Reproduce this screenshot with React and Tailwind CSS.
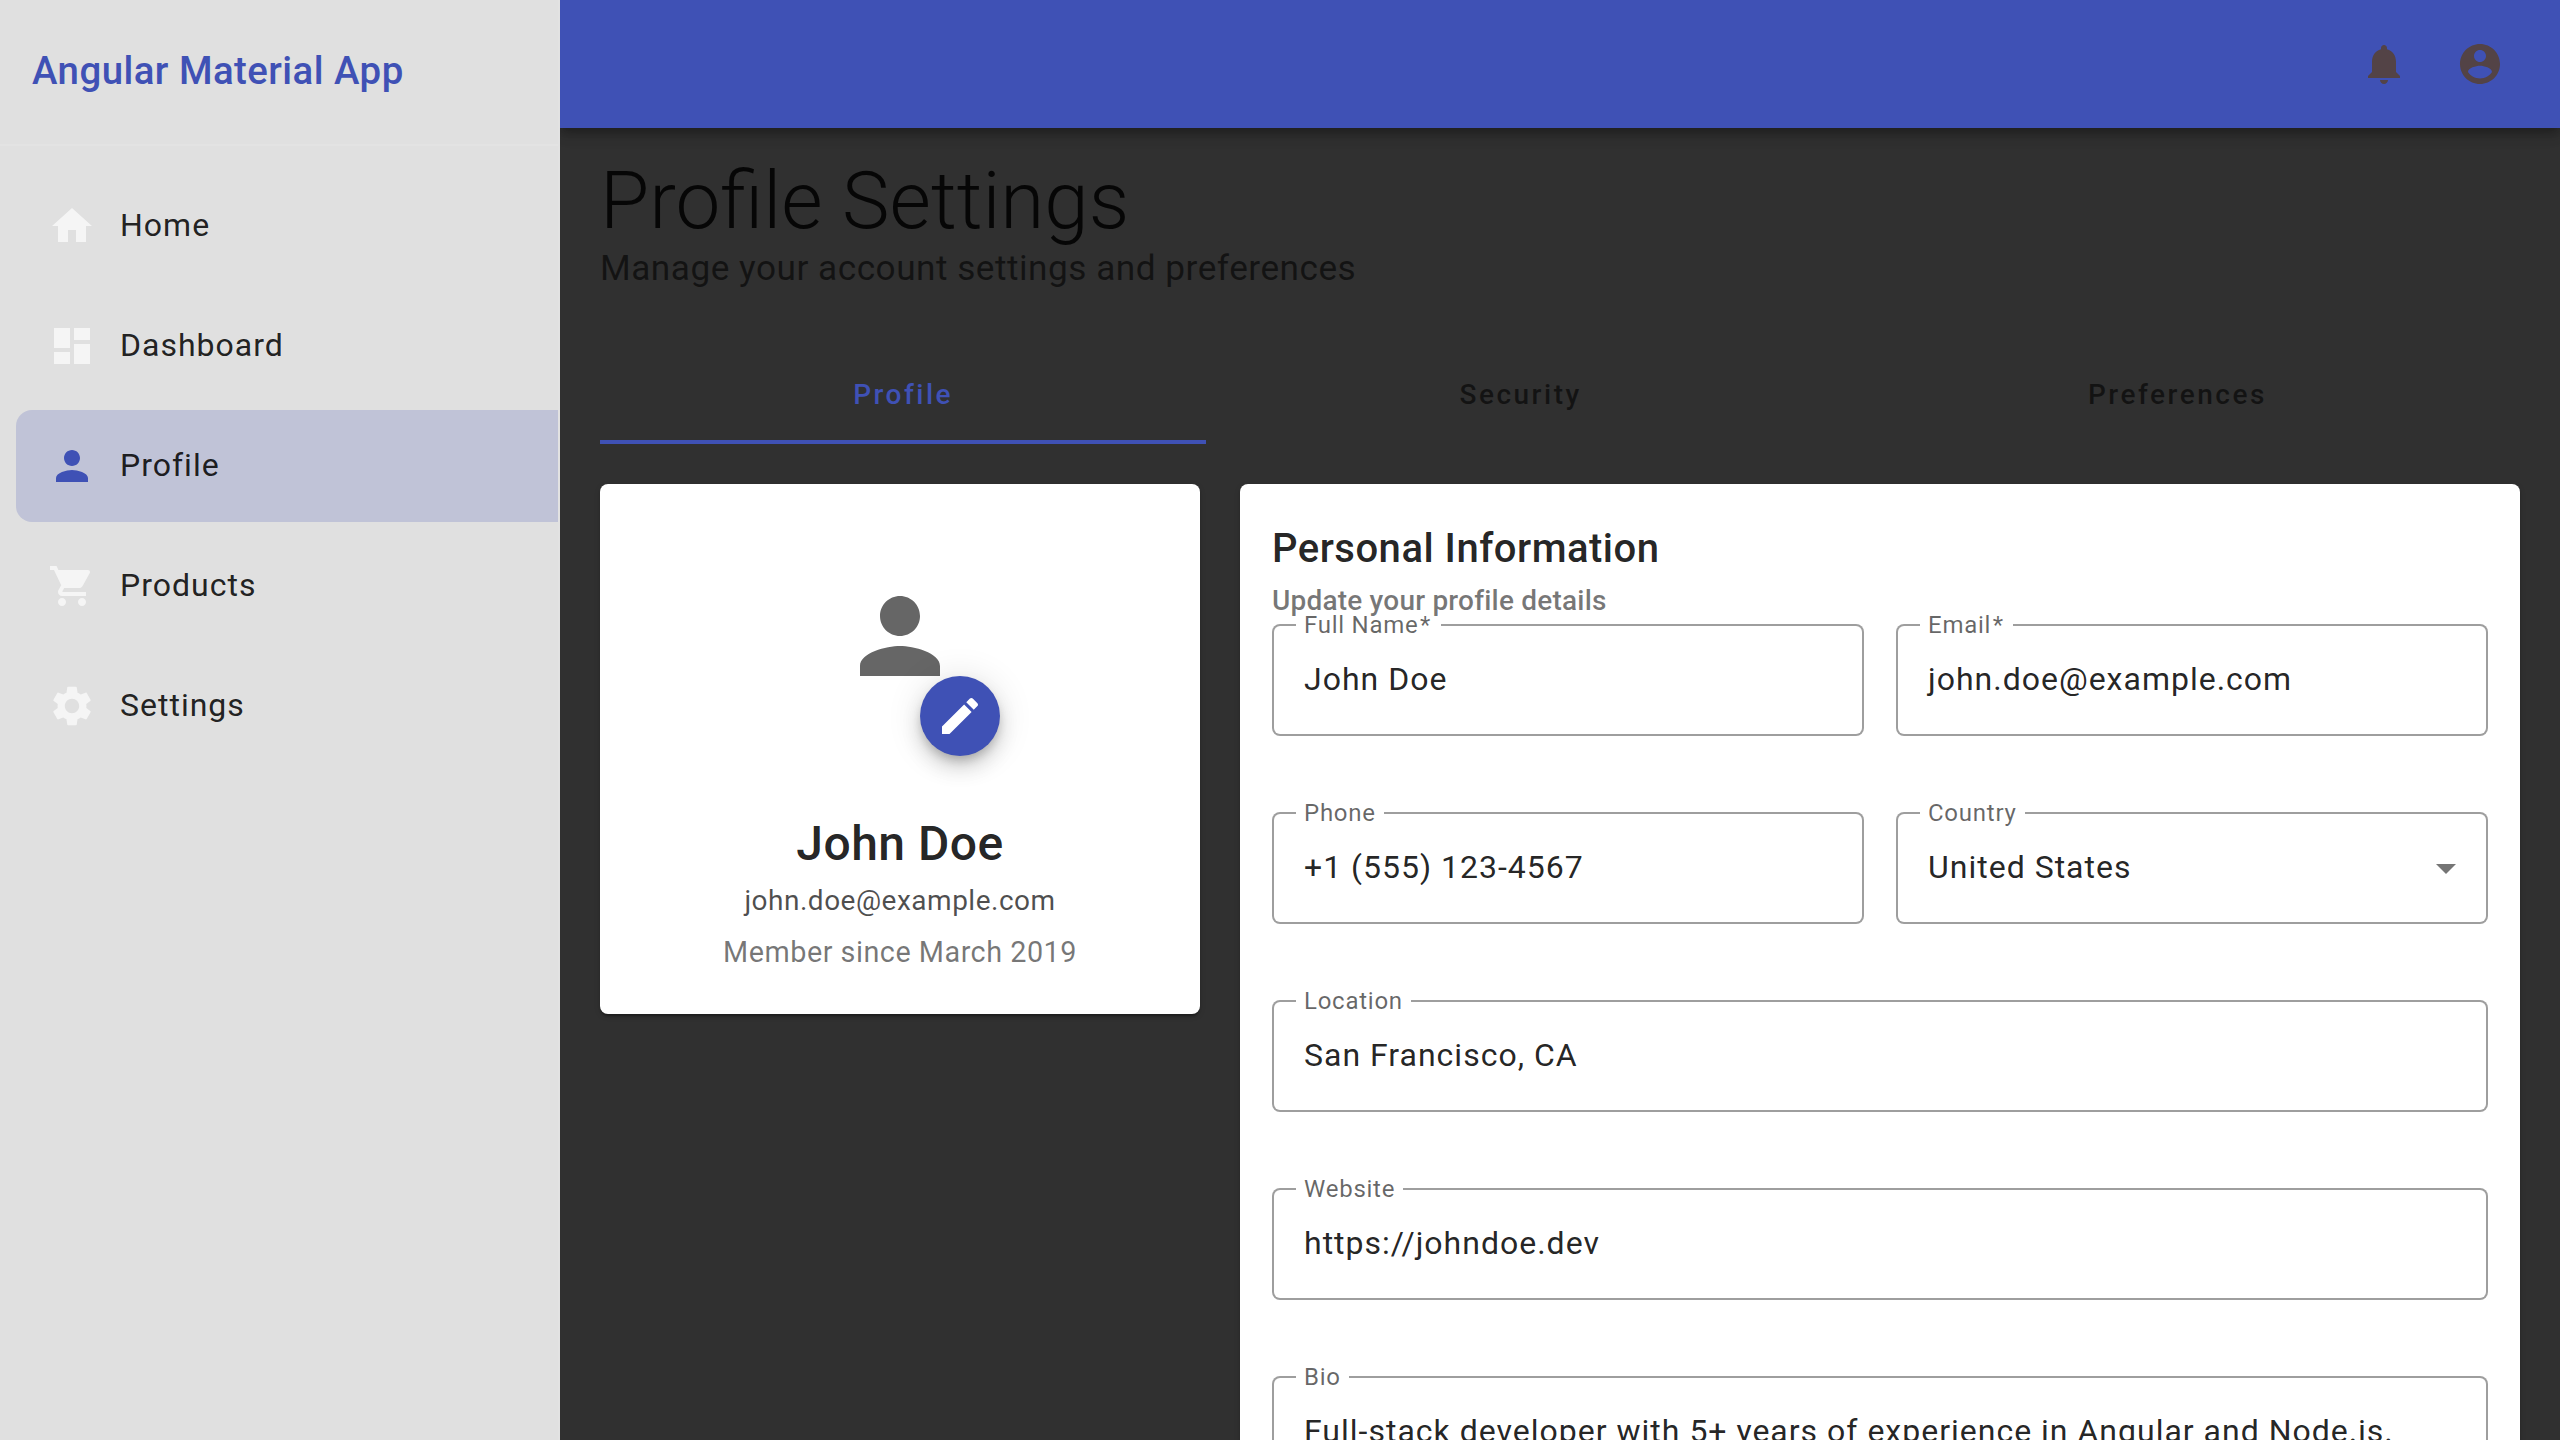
const ICONS = {
  home: 'M10 20v-6h4v6h5v-8h3L12 3 2 12h3v8z',
  dashboard: 'M3 13h8V3H3v10zm0 8h8v-6H3v6zm10 0h8V11h-8v10zm0-18v6h8V3h-8z',
  person:
    'M12 12c2.21 0 4-1.79 4-4s-1.79-4-4-4-4 1.79-4 4 1.79 4 4 4zm0 2c-2.67 0-8 1.34-8 4v2h16v-2c0-2.66-5.33-4-8-4z',
  cart:
    'M7 18c-1.1 0-1.99.9-1.99 2S5.9 22 7 22s2-.9 2-2-.9-2-2-2zM1 2v2h2l3.6 7.59-1.35 2.45c-.16.28-.25.61-.25.96 0 1.1.9 2 2 2h12v-2H7.42c-.14 0-.25-.11-.25-.25l.03-.12.9-1.63h7.45c.75 0 1.41-.41 1.75-1.03l3.58-6.49c.08-.14.12-.31.12-.48 0-.55-.45-1-1-1H5.21l-.94-2H1zm16 16c-1.1 0-1.99.9-1.99 2s.89 2 1.99 2 2-.9 2-2-.9-2-2-2z',
  settings:
    'M19.14 12.94c.04-.3.06-.61.06-.94 0-.32-.02-.64-.07-.94l2.03-1.58c.18-.14.23-.41.12-.61l-1.92-3.32c-.12-.22-.37-.29-.59-.22l-2.39.96c-.5-.38-1.03-.7-1.62-.94l-.36-2.54c-.04-.24-.24-.41-.48-.41h-3.84c-.24 0-.43.17-.47.41l-.36 2.54c-.59.24-1.13.57-1.62.94l-2.39-.96c-.22-.08-.47 0-.59.22L2.74 8.87c-.12.21-.08.47.12.61l2.03 1.58c-.05.3-.09.63-.09.94s.02.64.07.94l-2.03 1.58c-.18.14-.23.41-.12.61l1.92 3.32c.12.22.37.29.59.22l2.39-.96c.5.38 1.03.7 1.62.94l.36 2.54c.05.24.24.41.48.41h3.84c.24 0 .44-.17.47-.41l.36-2.54c.59-.24 1.13-.56 1.62-.94l2.39.96c.22.08.47 0 .59-.22l1.92-3.32c.12-.22.07-.47-.12-.61l-2.01-1.58zM12 15.6c-1.98 0-3.6-1.62-3.6-3.6s1.62-3.6 3.6-3.6 3.6 1.62 3.6 3.6-1.62 3.6-3.6 3.6z',
  bell:
    'M12 22c1.1 0 2-.9 2-2h-4c0 1.1.89 2 2 2zm6-6v-5c0-3.07-1.64-5.64-4.5-6.32V4c0-.83-.67-1.5-1.5-1.5s-1.5.67-1.5 1.5v.68C7.63 5.36 6 7.92 6 11v5l-2 2v1h16v-1l-2-2z',
  account:
    'M12 2C6.48 2 2 6.48 2 12s4.48 10 10 10 10-4.48 10-10S17.52 2 12 2zm0 3c1.66 0 3 1.34 3 3s-1.34 3-3 3-3-1.34-3-3 1.34-3 3-3zm0 14.2c-2.5 0-4.71-1.28-6-3.22.03-1.99 4-3.08 6-3.08 1.99 0 5.97 1.09 6 3.08-1.29 1.94-3.5 3.22-6 3.22z',
  edit:
    'M3 17.25V21h3.75L17.81 9.94l-3.75-3.75L3 17.25zM20.71 7.04c.39-.39.39-1.02 0-1.41l-2.34-2.34c-.39-.39-1.02-.39-1.41 0l-1.83 1.83 3.75 3.75 1.83-1.83z',
};

function Icon({ name, className }) {
  return (
    <svg viewBox="0 0 24 24" fill="currentColor" className={className} aria-hidden="true">
      <path d={ICONS[name]} />
    </svg>
  );
}

const NAV = [
  { icon: 'home', label: 'Home' },
  { icon: 'dashboard', label: 'Dashboard' },
  { icon: 'person', label: 'Profile', active: true },
  { icon: 'cart', label: 'Products' },
  { icon: 'settings', label: 'Settings' },
];

function Sidebar() {
  return (
    <aside className="z-20 flex w-[560px] shrink-0 flex-col border-r-2 border-[#e2e2e2] bg-[#e0e0e0]">
      <div className="flex h-[146px] items-center border-b-2 border-[#e3e3e3] px-8 pb-0.5">
        <h2 className="text-[38.4px] leading-[64px] font-medium tracking-[0.46px] text-[#3f51b5]">
          Angular Material App
        </h2>
      </div>
      <nav className="flex flex-col gap-2 pt-6 pl-4">
        {NAV.map((item) => (
          <a
            key={item.label}
            className={`flex h-28 items-center gap-6 rounded-l-2xl pl-8 ${item.active ? 'bg-[#3f51b5]/20' : ''}`}
          >
            <Icon
              name={item.icon}
              className={`size-12 ${item.active ? 'text-[#3f51b5]' : 'text-[#f5f5f5]'}`}
            />
            <span className="pb-0.5 text-[32px] leading-[48px] tracking-[1px] text-black/87">{item.label}</span>
          </a>
        ))}
      </nav>
    </aside>
  );
}

function Field({ label, value, required, select }) {
  return (
    <div className="flex h-28 text-[32px] leading-[48px] tracking-[1px]">
      <div className="w-6 shrink-0 rounded-l-lg border-2 border-r-0 border-black/38" />
      <div className="h-full border-b-2 border-black/38 px-2">
        <span className="-mt-[17px] block text-[24px] leading-9 tracking-[0.75px] whitespace-nowrap text-black/60">
          {label}
          {required && <span className="mx-[1.5px]">*</span>}
        </span>
        <div className="mt-3 w-0 whitespace-nowrap text-black/87">{value}</div>
      </div>
      <div className="flex grow items-center justify-end rounded-r-lg border-2 border-l-0 border-black/38 pr-[30px]">
        {select && (
          <svg viewBox="0 0 20 10" className="mt-0.5 h-2.5 w-5 text-black/54" fill="currentColor">
            <path d="M0 0h20L10 10z" />
          </svg>
        )}
      </div>
    </div>
  );
}

const CARD =
  'rounded-lg bg-white shadow-[0_4px_2px_-2px_rgba(0,0,0,0.2),0_2px_2px_0_rgba(0,0,0,0.14),0_2px_6px_0_rgba(0,0,0,0.12)]';

function ProfileCard() {
  return (
    <section className={`flex h-[530px] w-[600px] shrink-0 flex-col items-center pt-[92px] ${CARD}`}>
      <div className="relative">
        <Icon name="person" className="size-[120px] text-black/60" />
        <button className="absolute top-[100px] left-20 flex size-20 items-center justify-center rounded-full bg-[#3f51b5] text-white shadow-[0_6px_10px_-2px_rgba(0,0,0,0.2),0_12px_20px_0_rgba(0,0,0,0.14),0_2px_36px_0_rgba(0,0,0,0.12)]">
          <Icon name="edit" className="size-12" />
        </button>
      </div>
      <h3 className="mt-[116px] text-[48px] leading-[64px] font-medium tracking-[0.5px] text-black/87">
        John Doe
      </h3>
      <p className="mt-[5px] text-[28px] leading-10 tracking-[0.5px] text-black/70">john.doe@example.com</p>
      <p className="mt-[11px] text-[28.8px] leading-10 tracking-[0.5px] text-black/54">
        Member since March 2019
      </p>
    </section>
  );
}

function PersonalInfoCard() {
  return (
    <section className={`h-[1100px] grow px-8 pt-[33px] ${CARD}`}>
      <h3 className="text-[40px] leading-[62px] font-medium tracking-[0.5px] text-black/87">
        <span className="inline-block pt-px">Personal Information</span>
      </h3>
      <p className="-mt-px mb-px text-[28px] leading-[44px] font-medium tracking-[0.2px] text-black/54">
        Update your profile details
      </p>
      <div className="grid grid-cols-2 gap-x-8 gap-y-[76px]">
        <Field label="Full Name" value="John Doe" required />
        <Field label="Email" value="john.doe@example.com" required />
        <Field label="Phone" value="+1 (555) 123-4567" />
        <Field label="Country" value="United States" select />
        <div className="col-span-2">
          <Field label="Location" value="San Francisco, CA" />
        </div>
        <div className="col-span-2">
          <Field label="Website" value="https://johndoe.dev" />
        </div>
        <div className="col-span-2">
          <Field label="Bio" value="Full-stack developer with 5+ years of experience in Angular and Node.js." />
        </div>
      </div>
    </section>
  );
}

function Tabs() {
  return (
    <div className="mt-[54px] flex text-[28px] leading-9 font-medium tracking-[2.5px]">
      <div className="flex h-24 grow items-center justify-center border-b-4 border-[#3f51b5] px-12 pt-px text-[#3f51b5]">
        Profile
      </div>
      <div className="flex h-24 grow items-center justify-center border-b-4 border-transparent px-12 pt-px text-black/60">
        Security
      </div>
      <div className="flex h-24 grow items-center justify-center border-b-4 border-transparent px-12 pt-px text-black/60">
        Preferences
      </div>
    </div>
  );
}

export default function App() {
  return (
    <div className="flex h-[1440px] w-[2560px] overflow-hidden bg-[#303030] font-['Roboto',sans-serif] antialiased">
      <Sidebar />
      <div className="flex grow flex-col">
        <header className="z-10 flex h-32 shrink-0 items-center justify-end gap-12 bg-[#3f51b5] pr-14 text-[#534346] shadow-[0_4px_8px_-2px_rgba(0,0,0,0.2),0_8px_10px_0_rgba(0,0,0,0.14),0_2px_20px_0_rgba(0,0,0,0.12)]">
          <Icon name="bell" className="size-12" />
          <Icon name="account" className="size-12" />
        </header>
        <main className="px-10 pt-[41px]">
          <h1 className="text-[80px] leading-[64px] font-light text-black/87">Profile Settings</h1>
          <p className="mt-[9px] text-[35.2px] leading-[52px] tracking-[0.5px] text-black/60">
            Manage your account settings and preferences
          </p>
          <Tabs />
          <div className="mt-10 flex items-start gap-10">
            <ProfileCard />
            <PersonalInfoCard />
          </div>
        </main>
      </div>
    </div>
  );
}
